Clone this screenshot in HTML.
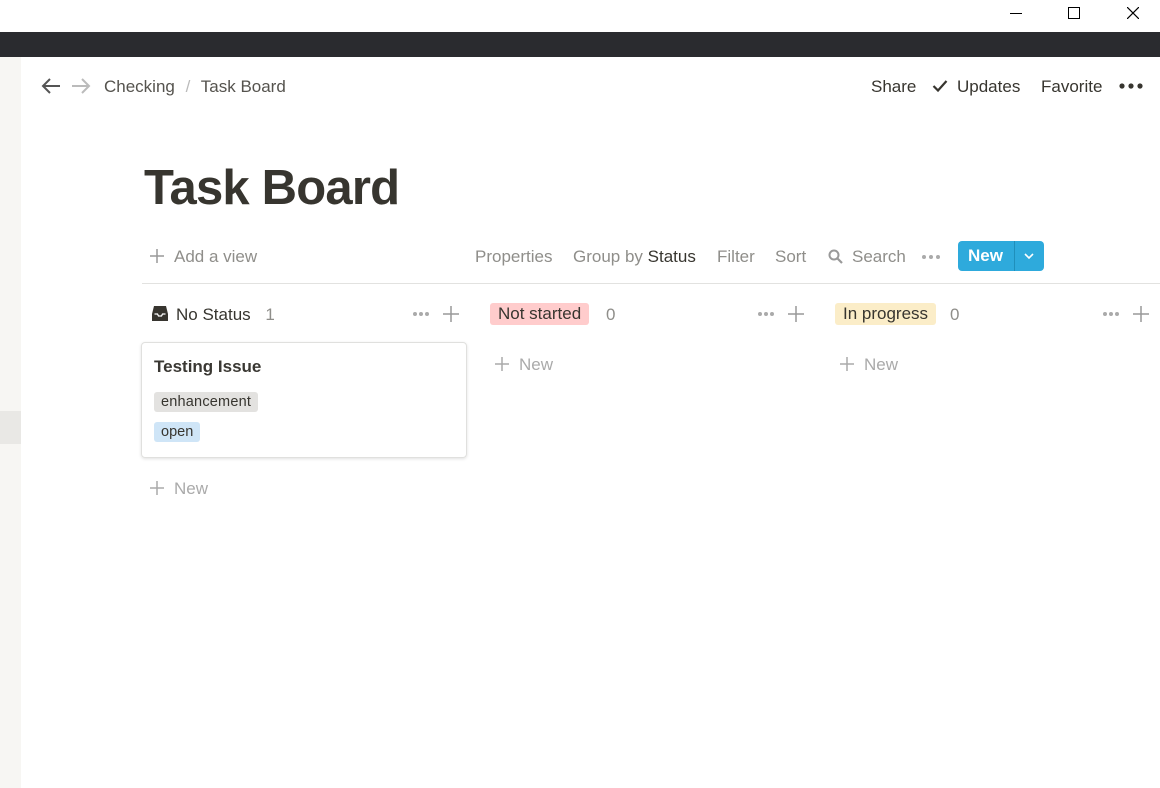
<!DOCTYPE html><html><head><style>
body{margin:0;width:1160px;height:788px;overflow:hidden;background:#fff;font-family:"Liberation Sans",sans-serif;position:relative;color:#37352f}
.a{position:absolute;white-space:nowrap}
.g{color:#8f8e8a}
</style></head><body>
<div class="a" style="left:1010px;top:13px;width:12px;height:1px;background:#000"></div>
<div class="a" style="left:1068px;top:7px;width:10px;height:10px;border:1px solid #000"></div>
<svg class="a" style="left:1127px;top:7px" width="12" height="12"><path d="M0 0L12 12M12 0L0 12" stroke="#000" stroke-width="1.2"/></svg>
<div class="a" style="left:0;top:32px;width:1160px;height:25px;background:#2a2b2f"></div>
<div class="a" style="left:0;top:57px;width:21px;height:731px;background:#f7f6f3"></div>
<div class="a" style="left:0;top:411px;width:21px;height:33px;background:#e9e8e5"></div>
<svg class="a" style="left:40px;top:77px" width="22" height="18"><path d="M3 9H20M10 2L3 9L10 16" stroke="#555" stroke-width="2" fill="none"/></svg>
<svg class="a" style="left:70px;top:77px" width="22" height="18"><path d="M2 9H19M12 2L19 9L12 16" stroke="#bbb" stroke-width="2" fill="none"/></svg>
<div class="a" style="left:104px;top:77px;font-size:17px;color:#55534e">Checking <span style="color:#bbb;margin:0 6px">/</span> Task Board</div>
<div class="a" style="left:871px;top:77px;font-size:17px;color:#37352f">Share</div>
<svg class="a" style="left:932px;top:79px" width="16" height="14"><path d="M1.5 7L6 11.5L14.5 2" stroke="#37352f" stroke-width="2.2" fill="none"/></svg>
<div class="a" style="left:957px;top:77px;font-size:17px">Updates</div>
<div class="a" style="left:1041px;top:77px;font-size:17px">Favorite</div>
<svg class="a" style="left:1119px;top:82px" width="26" height="8"><circle cx="3" cy="4" r="2.6" fill="#37352f"/><circle cx="12" cy="4" r="2.6" fill="#37352f"/><circle cx="21" cy="4" r="2.6" fill="#37352f"/></svg>
<div class="a" style="left:144px;top:160px;font-size:49px;font-weight:bold;color:#37352f;letter-spacing:-0.8px">Task Board</div>
<svg class="a" style="left:150px;top:249px" width="14" height="14"><path d="M7 0V14M0 7H14" stroke="#999" stroke-width="1.5"/></svg>
<div class="a g" style="left:174px;top:247px;font-size:17px">Add a view</div>
<div class="a g" style="left:475px;top:247px;font-size:17px">Properties</div>
<div class="a g" style="left:573px;top:247px;font-size:17px">Group by <span style="color:#37352f">Status</span></div>
<div class="a g" style="left:717px;top:247px;font-size:17px">Filter</div>
<div class="a g" style="left:775px;top:247px;font-size:17px">Sort</div>
<svg class="a" style="left:828px;top:249px" width="16" height="16"><circle cx="6" cy="6" r="4.5" stroke="#999" stroke-width="2" fill="none"/><path d="M9.5 9.5L14 14" stroke="#999" stroke-width="2.2"/></svg>
<div class="a g" style="left:852px;top:247px;font-size:17px">Search</div>
<svg class="a" style="left:921px;top:254px" width="20" height="6"><circle cx="3" cy="3" r="2" fill="#aaa"/><circle cx="10" cy="3" r="2" fill="#aaa"/><circle cx="17" cy="3" r="2" fill="#aaa"/></svg>
<div class="a" style="left:958px;top:241px;width:86px;height:30px;background:#2eaadc;border-radius:4px"></div>
<div class="a" style="left:968px;top:246px;font-size:17px;font-weight:bold;color:#fff">New</div>
<div class="a" style="left:1014px;top:241px;width:1px;height:30px;background:#1f8fbb"></div>
<svg class="a" style="left:1023px;top:252px" width="12" height="8"><path d="M2 2L6 6L10 2" stroke="#fff" stroke-width="1.6" fill="none"/></svg>
<div class="a" style="left:142px;top:283px;width:1018px;height:1px;background:#e2e2e0"></div>
<svg class="a" style="left:151px;top:305px" width="18" height="17"><path d="M3 1H15L17 9V16H1V9Z" fill="#37352f"/><path d="M3.5 9H6.5L7.5 11H10.5L11.5 9H14.5" stroke="#fff" stroke-width="1.3" fill="none"/></svg>
<div class="a" style="left:176px;top:305px;font-size:17px">No Status <span class="g" style="margin-left:10px">1</span></div>
<div class="a" style="left:490px;top:303px;background:#ffcccc;border-radius:3px;padding:1px 8px;font-size:17px">Not started</div><div class="a g" style="left:606px;top:305px;font-size:17px">0</div>
<div class="a" style="left:835px;top:303px;background:#fbedc8;border-radius:3px;padding:1px 8px;font-size:17px">In progress</div><div class="a g" style="left:950px;top:305px;font-size:17px">0</div>
<svg class="a" style="left:412px;top:311px" width="18" height="6"><circle cx="3" cy="3" r="2" fill="#aaa"/><circle cx="9" cy="3" r="2" fill="#aaa"/><circle cx="15" cy="3" r="2" fill="#aaa"/></svg>
<svg class="a" style="left:443px;top:306px" width="16" height="16"><path d="M8 0V16M0 8H16" stroke="#999" stroke-width="1.5"/></svg>
<svg class="a" style="left:757px;top:311px" width="18" height="6"><circle cx="3" cy="3" r="2" fill="#aaa"/><circle cx="9" cy="3" r="2" fill="#aaa"/><circle cx="15" cy="3" r="2" fill="#aaa"/></svg>
<svg class="a" style="left:788px;top:306px" width="16" height="16"><path d="M8 0V16M0 8H16" stroke="#999" stroke-width="1.5"/></svg>
<svg class="a" style="left:1102px;top:311px" width="18" height="6"><circle cx="3" cy="3" r="2" fill="#aaa"/><circle cx="9" cy="3" r="2" fill="#aaa"/><circle cx="15" cy="3" r="2" fill="#aaa"/></svg>
<svg class="a" style="left:1133px;top:306px" width="16" height="16"><path d="M8 0V16M0 8H16" stroke="#999" stroke-width="1.5"/></svg>
<div class="a" style="left:141px;top:342px;width:324px;height:114px;border:1px solid #e0e0de;border-radius:4px;box-shadow:0 1px 3px rgba(0,0,0,.12)"></div>
<div class="a" style="left:154px;top:357px;font-size:17px;font-weight:bold;color:#3a3833">Testing Issue</div>
<div class="a" style="left:154px;top:392px;background:#e3e2e0;border-radius:3px;padding:2px 7px;font-size:14.5px;letter-spacing:0.2px">enhancement</div>
<div class="a" style="left:154px;top:422px;background:#cfe5f7;border-radius:3px;padding:2px 7px;font-size:14.5px">open</div>
<svg class="a" style="left:150px;top:481px" width="14" height="14"><path d="M7 0V14M0 7H14" stroke="#aaa" stroke-width="1.5"/></svg>
<div class="a" style="left:174px;top:479px;font-size:17px;color:#aaa">New</div>
<svg class="a" style="left:495px;top:357px" width="14" height="14"><path d="M7 0V14M0 7H14" stroke="#aaa" stroke-width="1.5"/></svg>
<div class="a" style="left:519px;top:355px;font-size:17px;color:#aaa">New</div>
<svg class="a" style="left:840px;top:357px" width="14" height="14"><path d="M7 0V14M0 7H14" stroke="#aaa" stroke-width="1.5"/></svg>
<div class="a" style="left:864px;top:355px;font-size:17px;color:#aaa">New</div>
</body></html>
